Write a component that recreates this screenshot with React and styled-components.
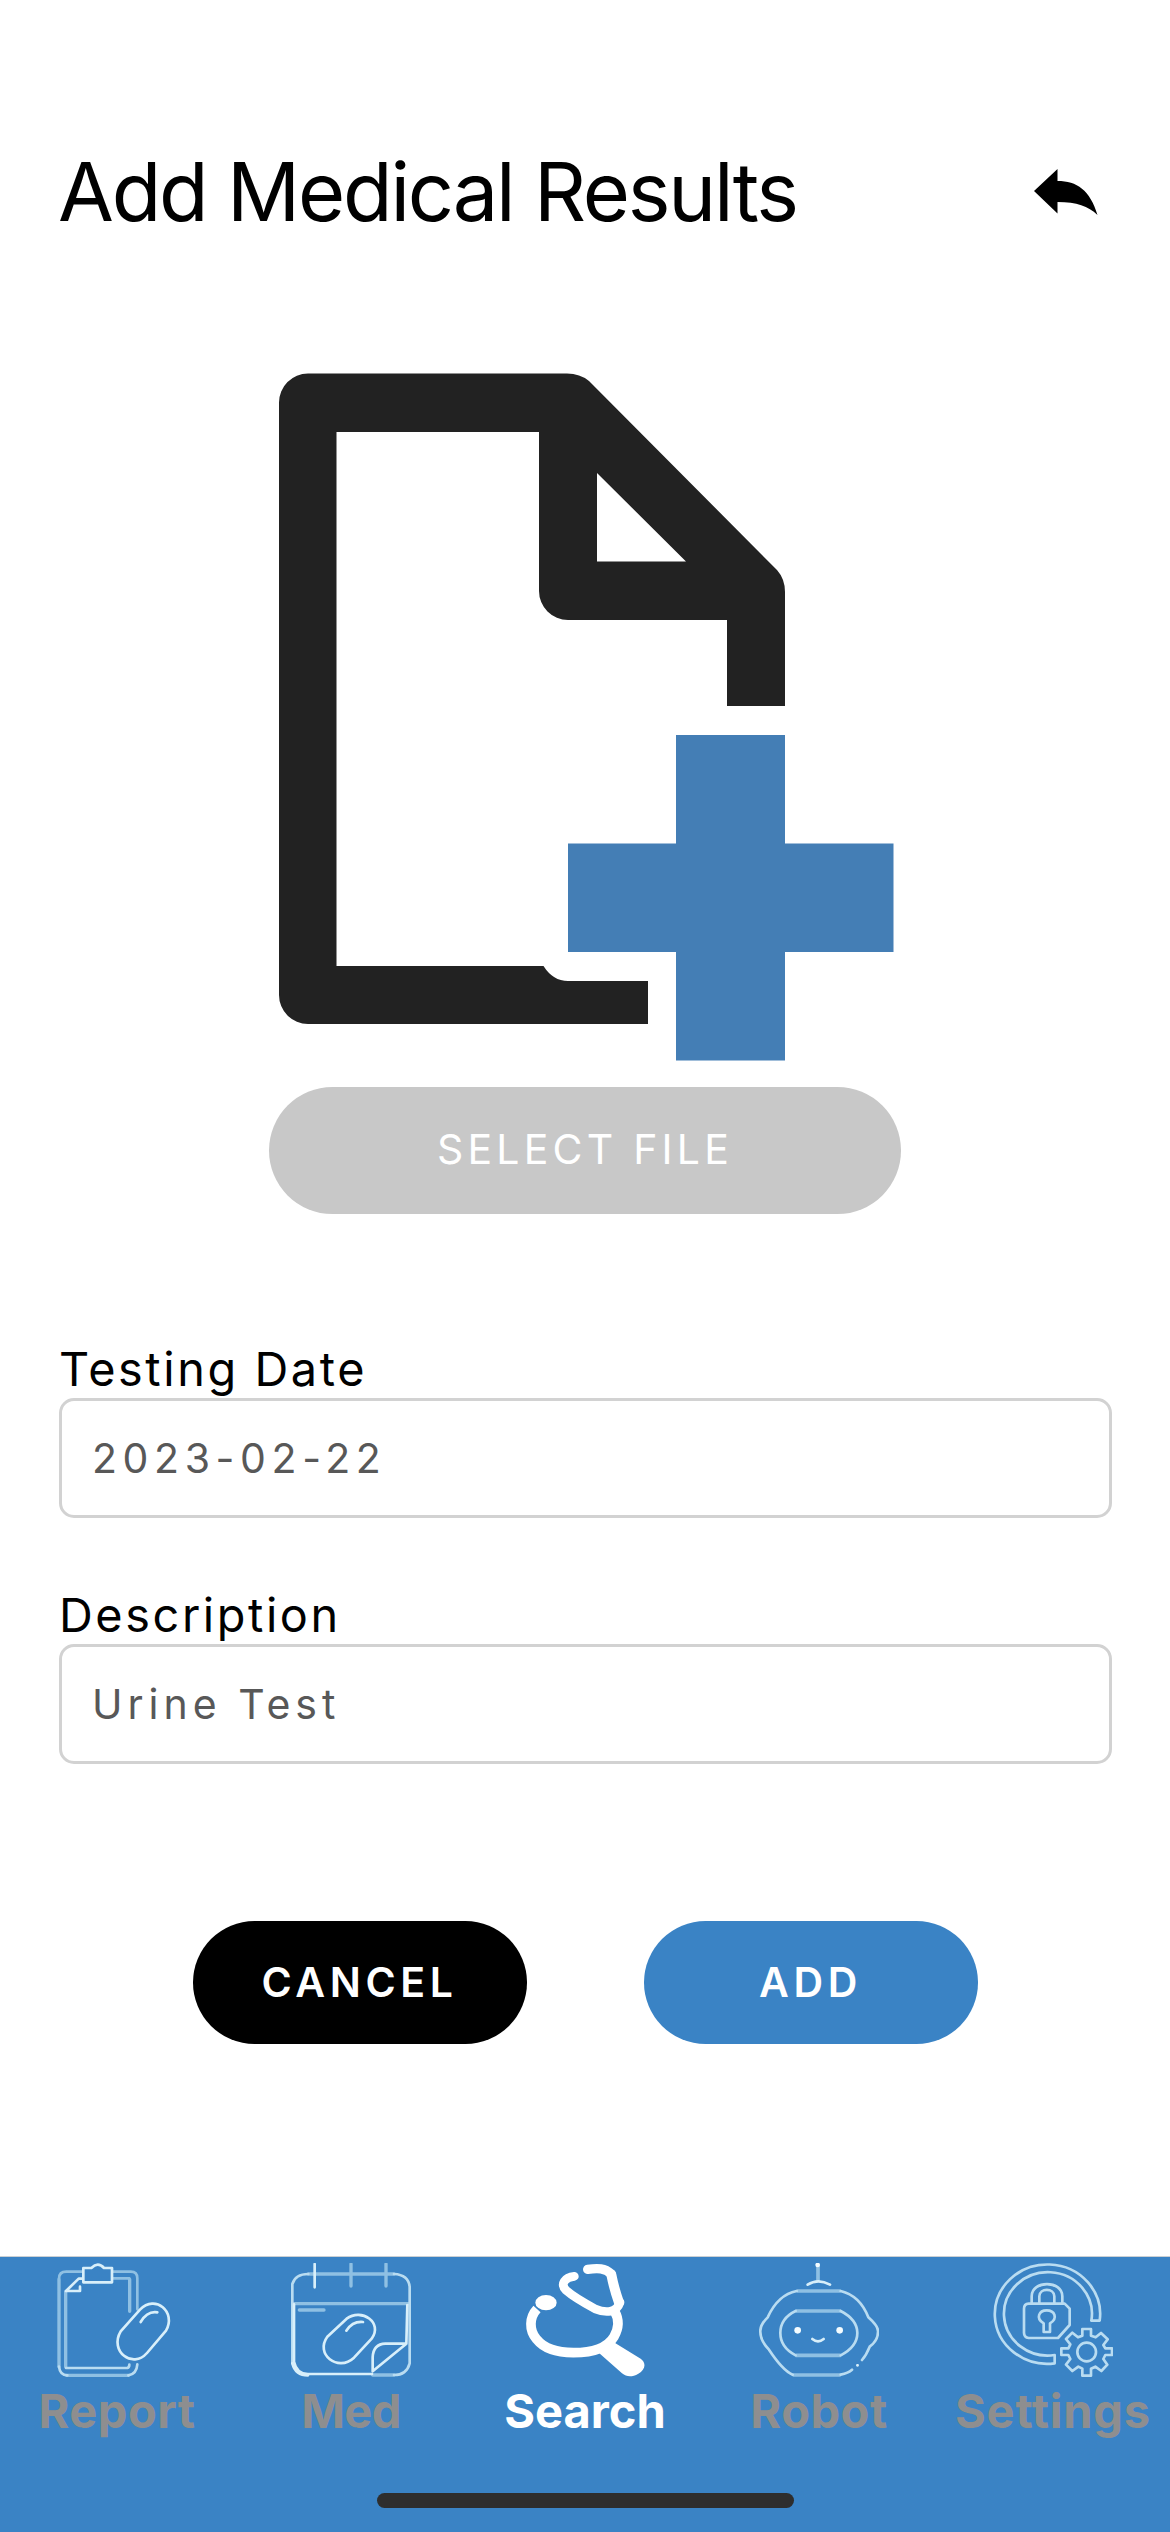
import React from "react";
import styled, { createGlobalStyle } from "styled-components";

const GlobalStyle = createGlobalStyle`
  *, *::before, *::after { box-sizing: border-box; }
  body { margin: 0; background: #fff; }
`;

const Screen = styled.div`
  display: flex;
  flex-direction: column;
  width: 1170px;
  height: 2532px;
  overflow: hidden;
  background: #fff;
  color: #000;
  font-family: Inter, "Liberation Sans", sans-serif;
`;

const Header = styled.header`
  display: flex;
  align-items: center;
  justify-content: space-between;
  height: 98px;
  margin-top: 143px;
  padding: 0 71px 0 58px;
`;

const Title = styled.h1`
  margin: 0;
  font-size: 81px;
  font-weight: 400;
  line-height: 98px;
  letter-spacing: -2.2px;
  white-space: nowrap;
`;

const BackButton = styled.button`
  display: flex;
  padding: 0 0 3px;
  border: 0;
  background: none;
`;

const Upload = styled.section`
  display: flex;
  flex-direction: column;
  align-items: center;
  margin-top: 120px;
`;

const FileArt = styled.svg`
  display: block;
  width: 640px;
  height: 726px;
`;

const Pill = styled.button`
  display: flex;
  align-items: center;
  justify-content: center;
  width: ${(p) => p.$width}px;
  height: ${(p) => p.$height}px;
  padding: 0 0 ${(p) => p.$lift}px;
  border: 0;
  border-radius: 64px;
  background: ${(p) => p.$color};
  color: #fff;
  font-family: inherit;
  font-size: 41px;
  font-weight: ${(p) => p.$weight};
  letter-spacing: ${(p) => p.$spacing}px;
`;

const Form = styled.form`
  display: flex;
  flex-direction: column;
  gap: 68px;
  margin-top: 126px;
  padding: 0 58px 0 59px;
`;

const Field = styled.label`
  display: flex;
  flex-direction: column;
`;

const FieldLabel = styled.span`
  height: 58px;
  font-size: 46.8px;
  line-height: 58px;
  letter-spacing: 2.6px;
`;

const FieldInput = styled.input`
  width: 100%;
  height: 120px;
  padding: 0 30px;
  border: 3px solid #d2d2d2;
  border-radius: 15px;
  background: #fff;
  color: #585858;
  font-family: inherit;
  font-size: 41px;
  letter-spacing: ${(p) => p.$spacing}px;
  outline: 0;
`;

const Actions = styled.div`
  display: flex;
  justify-content: center;
  gap: 117px;
  margin-top: 157px;
`;

const TabBar = styled.nav`
  display: flex;
  flex-direction: column;
  align-items: center;
  height: 276px;
  margin-top: auto;
  border-top: 1px solid #cbd0d4;
  background: #3a83c5;
`;

const Tabs = styled.div`
  display: grid;
  grid-template-columns: repeat(5, 234px);
`;

const Tab = styled.a`
  display: flex;
  flex-direction: column;
  align-items: center;
  padding-top: 6px;
  color: ${(p) => (p.$active ? "#fff" : "#8e8e8f")};
`;

const TabIcon = styled.svg`
  display: block;
  width: 120px;
  height: 114px;
  fill: none;
  stroke: #b9dcf1;
  stroke-width: 8;
  stroke-linecap: round;
  stroke-linejoin: round;
`;

const TabLabel = styled.span`
  margin-top: 5px;
  font-size: 47px;
  font-weight: 700;
  line-height: 57px;
  letter-spacing: ${(p) => p.$spacing}px;
  white-space: nowrap;
`;

const HomeIndicator = styled.div`
  width: 417px;
  height: 15px;
  margin-top: 54px;
  border-radius: 8px;
  background: #2e2e2e;
`;

function BackIcon() {
  return (
    <svg width="70" height="60" viewBox="1029 160 70 60">
      <path d="M1034 190 L1057.500 168 V180 C1077 180 1090 189 1097.500 214 C1088 205 1077 201 1057.500 201 V212.500 Z" fill="#000" />
    </svg>
  );
}

function FileIcon() {
  return (
    <FileArt viewBox="265 361 640 726">
      <path
        fill="#222"
        fillRule="evenodd"
        d="M308 373.500H567Q580 373.500 589 381L777 570Q785 579 785 592V706H727V620H568A29 29 0 0 1 539 591V432H336.500V966H543.500Q553 981 568 981H648V1024H308A29 29 0 0 1 279 995V402.500A29 29 0 0 1 308 373.500ZM597 473V561.500H686Z"
      />
      <path fill="#447eb5" d="M676 735H785V843.500H893.500V952H785V1060.500H676V952H568V843.500H676Z" />
    </FileArt>
  );
}

function ReportIcon() {
  return (
    <TabIcon viewBox="171 69 360 342">
      <g stroke="#8fc0e3">
        <path strokeWidth="10" d="M177 380V118M197 380V155M389 118V214M200 406H385" />
        <path d="M338 95H392Q412 95 412 115V208M177 116Q177 95 199 95H247M338 115H388" />
      </g>
      <path d="M177 380Q180 406 202 406M198 384H382Q388 382 388 374M385 406Q410 402 412 373" />
      <path stroke="#d8effa" d="M250 84H274Q294 64 312 84H336V127H250ZM198 153L236 116H246M198 153H240V140" />
      <path stroke="#d8effa" d="M362 274L420 209C466 162 530 215 498 272L441 339C398 388 327 334 362 274Z" />
      <path stroke="#d8effa" d="M422 246Q442 212 472 217" />
    </TabIcon>
  );
}

function MedIcon() {
  return (
    <TabIcon viewBox="153 69 360 342">
      <g stroke="#8fc0e3" strokeWidth="10">
        <path d="M205 102H462M160 191H506M178 210H252M333 72V138M438 72V138M398 405H462" />
      </g>
      <path d="M157 370V132Q166 102 205 102M462 102Q505 104 509 140V370Q500 405 462 405" />
      <path stroke="#d8effa" d="M224 72V142M162 193V365Q170 402 204 402H396M157 370Q166 406 204 406" />
      <path stroke="#d8effa" d="M502 195L499 311L398 394V352Q400 312 436 311H499" />
      <path stroke="#d8effa" d="M262 290L320 236C365 203 430 248 395 296L342 353C293 398 224 342 262 290Z" />
      <path stroke="#d8effa" d="M319 272Q338 243 369 246" />
    </TabIcon>
  );
}

function SearchIcon() {
  return (
    <TabIcon viewBox="165 69 360 342">
      <ellipse cx="228" cy="188" rx="32" ry="23" fill="#fff" stroke="none" />
      <g stroke="#fff">
        <path
          strokeWidth="29"
          strokeLinecap="butt"
          d="M201 207C178 232 176 270 200 298C222 326 262 338 310 338C372 338 413 322 432 290C448 262 446 235 434 214"
        />
        <path strokeWidth="26" d="M313 109C284 112 270 132 288 151C312 172 348 192 376 207C408 220 440 218 450 187" />
        <path strokeWidth="28" d="M353 88C384 84 404 84 424 102" />
        <path strokeWidth="30" d="M424 104Q432 145 447 188" />
      </g>
      <path fill="#fff" stroke="none" d="M388 340L434 308L512 356C530 369 526 390 505 401C486 412 470 411 456 400Z" />
    </TabIcon>
  );
}

function RobotIcon() {
  return (
    <TabIcon viewBox="147 69 360 342">
      <g stroke="#8fc0e3" strokeWidth="11" strokeLinecap="butt">
        <path d="M324 75V124M260 153H392M257 213H392M257 346H392M248 405H392" />
      </g>
      <path d="M260 153Q204 164 173 232Q149 256 151 276Q151 302 177 329Q218 391 248 404M392 153Q450 167 475 232Q504 258 504 273Q505 301 479 320Q469 345 456 360M392 404Q415 399 426 389" />
      <path d="M257 213Q211 235 211 279Q211 322 257 346M392 213Q442 239 442 279Q442 320 392 346" />
      <path stroke="#d8effa" d="M293 134Q324 114 360 134M307 297Q324 311 341 297M442 376H443" />
      <g fill="#f4fcff" stroke="none">
        <circle cx="323" cy="75" r="7" />
        <circle cx="263" cy="271" r="10" />
        <circle cx="389" cy="271" r="10" />
      </g>
    </TabIcon>
  );
}

function SettingsIcon() {
  return (
    <TabIcon viewBox="159 69 360 342">
      <path d="M479 242A158 149 0 1 0 344 370V345A132 125 0 1 1 454 242Z" />
      <path d="M266 191H374L389 206V255L354 294H266Q252 292 252 278V206Q252 192 266 191ZM275 191V169C275 120 367 120 367 169V191M298 191V169C298 143 343 143 343 169V191" />
      <path d="M311 250C285 234 298 211 320 211C344 211 355 235 330 250V276H311Z" />
      <path d="M427 267H453V287L467 292L483 279L503 298L490 315L496 325H516V345H496L490 357L502 374L484 393L466 380L453 386V407H427V386L415 380L397 393L378 374L391 357L385 345H364V325H385L391 313L378 297L397 278L414 292L427 287Z" />
      <circle cx="440" cy="336" r="28" />
    </TabIcon>
  );
}

const TABS = [
  { label: "Report", Icon: ReportIcon, spacing: 0.5 },
  { label: "Med", Icon: MedIcon, spacing: -0.6 },
  { label: "Search", Icon: SearchIcon, spacing: 0, active: true },
  { label: "Robot", Icon: RobotIcon, spacing: 0.5 },
  { label: "Settings", Icon: SettingsIcon, spacing: 0.8 },
];

export default function App() {
  return (
    <>
      <GlobalStyle />
      <Screen>
        <Header>
          <Title>Add Medical Results</Title>
          <BackButton aria-label="Back">
            <BackIcon />
          </BackButton>
        </Header>
        <Upload>
          <FileIcon />
          <Pill $width={632} $height={127} $lift={4} $color="#c8c8c8" $weight={400} $spacing={4.2}>
            SELECT FILE
          </Pill>
        </Upload>
        <Form>
          <Field>
            <FieldLabel>Testing Date</FieldLabel>
            <FieldInput $spacing={5.6} defaultValue="2023-02-22" />
          </Field>
          <Field>
            <FieldLabel>Description</FieldLabel>
            <FieldInput $spacing={5} defaultValue="Urine Test" />
          </Field>
        </Form>
        <Actions>
          <Pill $width={334} $height={123} $lift={2} $color="#000" $weight={600} $spacing={4.6}>
            CANCEL
          </Pill>
          <Pill $width={334} $height={123} $lift={2} $color="#3a83c5" $weight={600} $spacing={4.6}>
            ADD
          </Pill>
        </Actions>
        <TabBar>
          <Tabs>
            {TABS.map(({ label, Icon, spacing, active }) => (
              <Tab key={label} $active={active}>
                <Icon />
                <TabLabel $spacing={spacing}>{label}</TabLabel>
              </Tab>
            ))}
          </Tabs>
          <HomeIndicator />
        </TabBar>
      </Screen>
    </>
  );
}
